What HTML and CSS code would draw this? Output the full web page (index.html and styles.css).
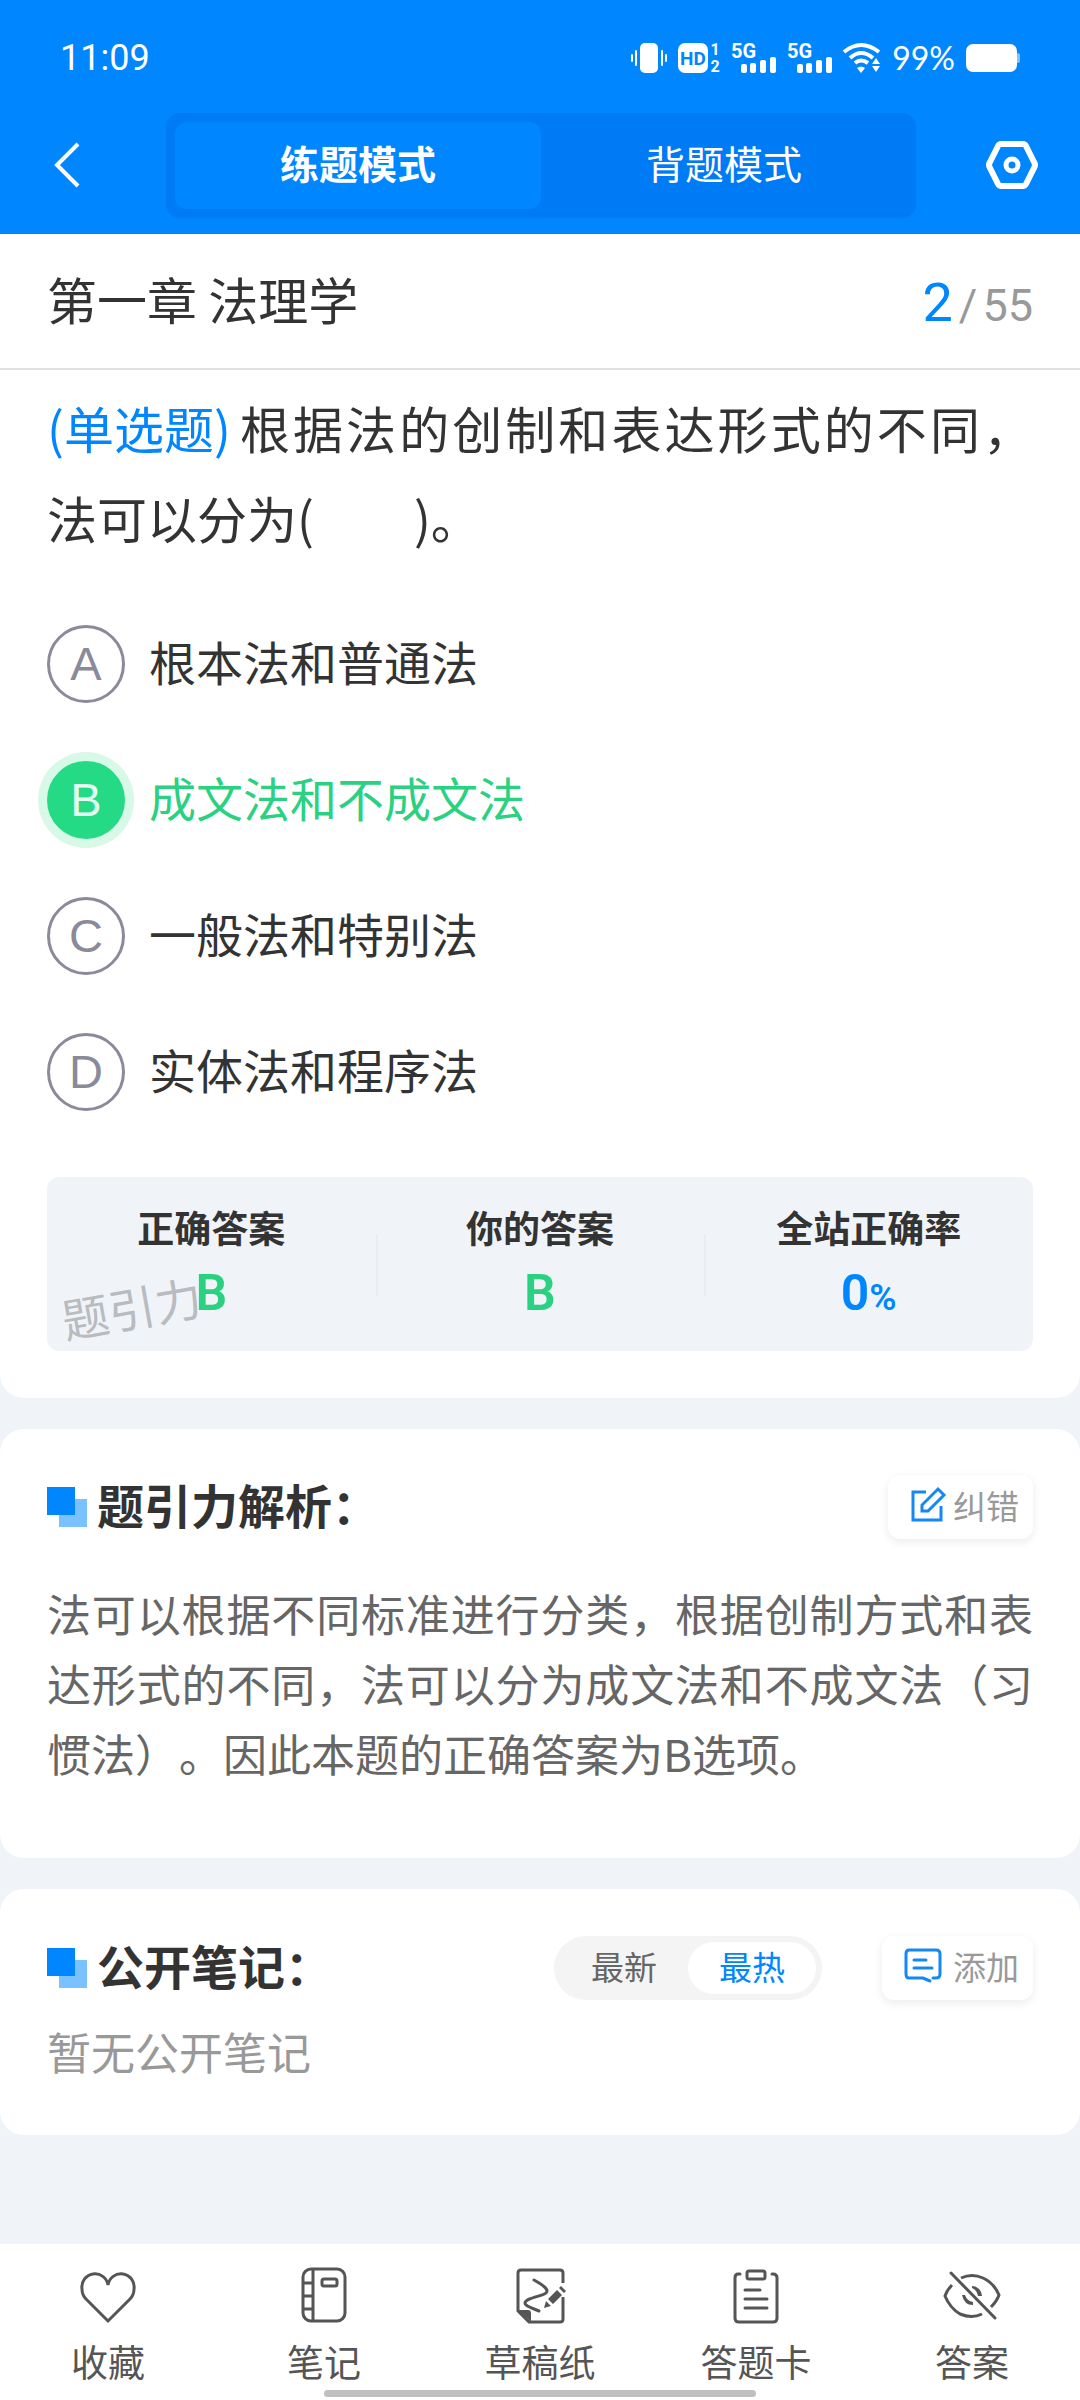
FILE: index.html
```html
<!DOCTYPE html>
<html lang="zh-CN">
<head>
<meta charset="utf-8">
<meta name="viewport" content="width=device-width, initial-scale=1">
<title>第一章 法理学</title>
<link rel="stylesheet" href="styles.css">
</head>
<body>
<header class="topbar">
  <div class="status">
    <span class="status-time">11:09</span>
    <div class="status-icons">
      <svg width="36" height="30" viewBox="0 0 36 30" fill="#fff" aria-hidden="true">
        <rect x="9" width="18" height="30" rx="5"/>
        <rect x="4" y="7" width="2" height="16" rx="1"/><rect x="30" y="7" width="2" height="16" rx="1"/>
        <rect x="0" y="11" width="2" height="8" rx="1"/><rect x="34" y="11" width="2" height="8" rx="1"/>
      </svg>
      <svg width="42" height="30" viewBox="0 0 42 30" aria-label="HD">
        <rect width="30" height="30" rx="7" fill="#fff"/>
        <text class="hd" x="15" y="22" text-anchor="middle">HD</text>
        <text class="sim" x="37" y="12" text-anchor="middle">1</text>
        <text class="sim" x="37" y="29" text-anchor="middle">2</text>
      </svg>
      <svg width="45" height="30" viewBox="0 0 45 30" fill="#fff">
        <text class="net" x="0" y="15">5G</text>
        <rect x="10" y="21" width="6" height="9" rx="2"/><rect x="19" y="20" width="6" height="10" rx="2"/><rect x="29" y="17" width="6" height="13" rx="2"/><rect x="39" y="14" width="6" height="16" rx="2"/>
      </svg>
      <svg width="45" height="30" viewBox="0 0 45 30" fill="#fff">
        <text class="net" x="0" y="15">5G</text>
        <rect x="10" y="21" width="6" height="9" rx="2"/><rect x="19" y="20" width="6" height="10" rx="2"/><rect x="29" y="17" width="6" height="13" rx="2"/><rect x="39" y="14" width="6" height="16" rx="2"/>
      </svg>
      <svg width="38" height="30" viewBox="0 0 38 30" aria-hidden="true">
        <g fill="none" stroke="#fff" stroke-width="4">
          <path d="M1 9Q18 -5 36 9"/><path d="M7 15Q18 5 30 15"/><path d="M12 20Q18 15 25 20"/>
        </g>
        <path d="M14 25Q18 22 22 25L18 30Z" fill="#fff"/>
        <path d="M33 15L37 21H29ZM33 29L29 23H37Z" fill="#fff"/>
      </svg>
      <span class="status-level">99%</span>
      <svg width="54" height="28" viewBox="0 0 54 28" aria-hidden="true">
        <rect width="51" height="28" rx="7" fill="#fff"/><path d="M51 9q3 0 3 2v6q0 2-3 2z" fill="#80c2ff"/>
      </svg>
    </div>
  </div>
  <div class="modebar">
    <button class="icon-btn back" type="button" aria-label="返回">
      <svg width="28" height="48" viewBox="0 0 28 48" fill="none" stroke="#fff" stroke-width="4"><path d="M25 2L4 23L25 44"/></svg>
    </button>
    <div class="modes">
      <button class="mode mode-on" type="button">练题模式</button>
      <button class="mode" type="button">背题模式</button>
    </div>
    <button class="icon-btn settings" type="button" aria-label="设置">
      <svg width="52" height="48" viewBox="0 1 52 48" fill="none" stroke="#fff" stroke-width="6" stroke-linejoin="round"><path d="M15 3H37Q39 3 40 5L48 21Q50 24 48 27L40 43Q39 45 37 45H15Q13 45 12 43L4 27Q2 24 4 21L12 5Q13 3 15 3Z"/><circle cx="26" cy="24" r="6" stroke-width="5"/></svg>
    </button>
  </div>
</header>

<main class="content">
  <section class="card card-question">
    <div class="chapter">
      <h1 class="chapter-name">第一章 法理学</h1>
      <p class="progress"><span class="progress-now">2</span><span class="progress-sep">/</span><span>55</span></p>
    </div>
    <div class="question">
      <p class="stem"><span class="kind">(单选题)</span>根据法的创制和表达形式的不同，法可以分为(&#12288;&#12288;)。</p>
      <form class="options">
        <label class="option"><span class="badge"><input class="dot" type="radio" name="answer" value="A"><span class="letter">A</span></span>根本法和普通法</label>
        <label class="option"><span class="badge"><input class="dot" type="radio" name="answer" value="B" checked><span class="letter">B</span></span>成文法和不成文法</label>
        <label class="option"><span class="badge"><input class="dot" type="radio" name="answer" value="C"><span class="letter">C</span></span>一般法和特别法</label>
        <label class="option"><span class="badge"><input class="dot" type="radio" name="answer" value="D"><span class="letter">D</span></span>实体法和程序法</label>
      </form>
      <dl class="result">
        <div class="result-item"><dt>正确答案</dt><dd>B</dd></div>
        <div class="result-item"><dt>你的答案</dt><dd>B</dd></div>
        <div class="result-item"><dt>全站正确率</dt><dd class="rate">0<small>%</small></dd></div>
        <div class="watermark" aria-hidden="true">题引力</div>
      </dl>
    </div>
  </section>

  <section class="card card-analysis">
    <div class="card-head">
      <h2 class="card-title"><i class="mark"></i><span class="card-name">题引力解析：</span></h2>
      <button class="action" type="button">
        <svg width="35" height="36" viewBox="0 0 35 36" fill="none" stroke="#1488f5" stroke-width="3"><path d="M16 5H3V33H31V19"/><path d="M12 24V18L28 2L34 8L18 24Z"/></svg>纠错</button>
    </div>
    <p class="analysis">法可以根据不同标准进行分类，根据创制方式和表达形式的不同，法可以分为成文法和不成文法（习惯法）。因此本题的正确答案为B选项。</p>
  </section>

  <section class="card card-notes">
    <div class="card-head">
      <h2 class="card-title"><i class="mark"></i><span class="card-name">公开笔记：</span></h2>
      <div class="tools">
        <div class="sort">
          <button class="sort-btn" type="button">最新</button>
          <button class="sort-btn sort-on" type="button">最热</button>
        </div>
        <button class="action" type="button">
          <svg width="41" height="36" viewBox="0 0 41 36" fill="none" stroke="#1488f5" stroke-width="3" stroke-linecap="round"><path d="M29 30H32Q36 30 36 26V6Q36 2 32 2H5Q2 2 2 6V26Q2 30 5 30H19L26 33"/><path d="M10 12H22M10 20H28"/></svg>添加</button>
      </div>
    </div>
    <p class="empty">暂无公开笔记</p>
  </section>
</main>

<nav class="tabbar">
  <button class="tab" type="button">
    <svg width="64" height="64" viewBox="0 0 64 64" fill="none" stroke="#555" stroke-width="3"><path d="M32 57L10 35Q6 31 6 25A13 13 0 0 1 32 21A13 13 0 0 1 58 25Q58 31 54 35Z"/></svg>收藏</button>
  <button class="tab" type="button">
    <svg width="64" height="64" viewBox="0 0 64 64" fill="none" stroke="#555" stroke-width="3"><rect x="11" y="5" width="42" height="52" rx="8"/><path d="M21 5V57M11 19H21M11 32H21M11 45H21"/><rect x="30" y="15" width="15" height="7" rx="2"/></svg>笔记</button>
  <button class="tab" type="button">
    <svg width="64" height="64" viewBox="0 0 64 64" fill="none" stroke="#555" stroke-width="3"><path d="M55 19V9Q55 6 52 6H13Q10 6 10 9V47L21 58H52Q55 58 55 55V33"/><path d="M10 46H20Q23 46 23 49V58Z" fill="#555" stroke="none"/><path d="M26 16C37 22 41 26 38 29C35 32 17 34 17 39C17 42 24 44 31 47" stroke-linecap="round"/><path d="M40 35L49 26L54 31L45 40ZM38 37L43 42L36 44ZM51 24L53 22L58 27L56 29Z" fill="#555" stroke="none"/></svg>草稿纸</button>
  <button class="tab" type="button">
    <svg width="64" height="64" viewBox="0 0 64 64" fill="none" stroke="#555" stroke-width="3" stroke-linecap="round"><path d="M16 10H14Q11 10 11 14V54Q11 58 15 58H49Q53 58 53 54V14Q53 10 49 10H48"/><rect x="23" y="7" width="18" height="8" rx="2"/><path d="M21 26H36M21 35H43M21 44H43"/></svg>答题卡</button>
  <button class="tab" type="button">
    <svg width="64" height="64" viewBox="0 0 64 64" fill="none" stroke="#555" stroke-width="3"><path d="M21 14Q32 9 43 14Q54 19 59 31Q57 37 51 43"/><path d="M12 21Q7 26 5 32Q10 44 20 50Q32 55 42 50"/><path d="M11 9L55 54" stroke-linecap="round"/><path d="M32 22A10 10 0 0 1 42 32H38Q37 26 32 24ZM22 31Q24 41 33 41V38Q27 37 25 31Z" fill="#555" stroke="none"/></svg>答案</button>
  <span class="home-bar"></span>
</nav>
</body>
</html>
```
FILE: styles.css
```css
* { box-sizing: border-box; }

body {
  margin: 0;
  min-height: 100vh;
  display: flex;
  flex-direction: column;
  background: #f0f4f8;
  color: #333;
  font-family: "Noto Sans CJK SC", sans-serif;
  text-spacing-trim: space-all;
}

h1, h2, p, dl, dd { margin: 0; }
svg { display: block; flex: none; overflow: visible; }

button {
  padding: 0;
  border: 0;
  background: none;
  color: inherit;
  font: inherit;
}

/* Top bar */
.topbar { background: #0086ff; color: #fff; }

.status {
  display: flex;
  justify-content: space-between;
  align-items: center;
  padding: 28px 60px 25px;
  line-height: 60px;
}
.status-time { font-family: Roboto, sans-serif; font-size: 36px; }
.status-icons { display: flex; align-items: center; gap: 11px; }
.status-level { font-family: Lato, sans-serif; font-size: 32px; }
.hd { font: 700 19px Roboto, sans-serif; fill: #0086ff; }
.sim { font: 700 16px Roboto, sans-serif; fill: #fff; }
.net { font: 700 20px Roboto, sans-serif; }

.modebar {
  display: grid;
  grid-template-columns: 166px 1fr 164px;
  align-items: center;
  padding-bottom: 16px;
}
.icon-btn { display: flex; }
.back { padding-left: 53px; }
.settings { padding-left: 70px; }
.modes {
  display: grid;
  grid-template-columns: 1fr 1fr;
  padding: 9px;
  border-radius: 14px;
  background: #007bf6;
}
.mode { padding-bottom: 6px; border-radius: 12px; font-size: 39px; line-height: 81px; }
.mode-on { background: #0086ff; font-weight: 700; }

/* Cards */
.content { display: grid; gap: 31px; }
.card { background: #fff; border-radius: 24px; }
.card-question { border-radius: 0 0 24px 24px; }

.chapter {
  display: flex;
  justify-content: space-between;
  padding: 0 47px;
  border-bottom: 2px solid #e0e0e0;
}
.chapter-name { padding-bottom: 6px; font-size: 50px; font-weight: 400; line-height: 128px; }
.progress {
  display: flex;
  align-items: baseline;
  align-self: center;
  padding-top: 6px;
  color: #999;
  font-family: Roboto, sans-serif;
  font-size: 45px;
  line-height: 60px;
}
.progress-now { color: #0086ff; font-size: 54px; }
.progress-sep { padding: 0 5px 0 6px; }

.question { padding: 12px 47px 47px; }
.stem { font-size: 50px; line-height: 90px; text-align: justify; }
.kind { display: inline-block; margin-right: 6px; color: #0086ff; }

.options { display: grid; gap: 58px; padding: 63px 0 66px; }
.option { display: flex; gap: 24px; font-size: 47px; line-height: 72px; }
.option:has(:checked) { color: #2ad181; }
.badge { display: grid; place-items: center; color: #8a8a99; font-family: "Liberation Sans", sans-serif; }
.dot, .letter { grid-area: 1 / 1; }
.dot {
  appearance: none;
  width: 78px;
  height: 78px;
  margin: 0;
  border: 3px solid #8a8a99;
  border-radius: 50%;
}
.dot:checked { border-color: #25da85; background: #25da85; box-shadow: 0 0 0 9px #d8f8e8; }
.dot:checked + .letter { color: #e4fff2; }

.result {
  position: relative;
  display: grid;
  grid-template-columns: 1fr 1fr 1fr;
  padding: 22px 0 20px;
  border-radius: 12px;
  background: #f0f4f8;
  text-align: center;
}
.result-item { position: relative; z-index: 1; }
.result-item + .result-item::before {
  content: "";
  position: absolute;
  left: 0;
  top: 35px;
  height: 62px;
  border-left: 2px solid #e9edf1;
}
.result dt { font-size: 37px; font-weight: 700; line-height: 56px; }
.result dd { color: #2ad181; font-family: Roboto, sans-serif; font-size: 50px; font-weight: 600; line-height: 76px; }
.result .rate { color: #0086ff; }
.rate small { font-size: 37px; line-height: 1; }
.watermark {
  position: absolute;
  left: 14px;
  bottom: 9px;
  color: #b8bbc0;
  font-size: 47px;
  line-height: 70px;
  transform: rotate(-10deg);
}

.card-analysis { padding: 45px 47px 70px; }
.card-notes { padding: 46px 47px 49px; }
.card-head { display: flex; justify-content: space-between; align-items: center; }
.card-title { display: flex; align-items: center; gap: 10px; font-size: 47px; font-weight: 700; line-height: 60px; }
.card-name { padding-bottom: 6px; }
.mark {
  width: 40px;
  height: 40px;
  background:
    linear-gradient(#0086ff, #0086ff) 0 0 / 28px 28px no-repeat,
    linear-gradient(#7ac1ff, #7ac1ff) 100% 100% / 28px 28px no-repeat;
}
.tools { display: flex; align-items: center; gap: 60px; }
.action {
  display: flex;
  align-items: center;
  gap: 8px;
  padding: 0 14px 4px 22px;
  border-radius: 12px;
  background: #fff;
  box-shadow: 0 3px 10px rgba(0, 0, 0, 0.08);
  color: #999;
  font-size: 33px;
  line-height: 60px;
}
.sort { display: flex; padding: 6px; border-radius: 32px; background: #f4f4f4; color: #666; }
.sort-btn { width: 128px; padding-bottom: 4px; border-radius: 26px; font-size: 33px; line-height: 48px; }
.sort-on { background: #fff; color: #0086ff; }
.analysis { padding-top: 38px; color: #666; font-size: 44px; line-height: 70px; text-align: justify; }
.empty { padding-top: 15px; color: #999; font-size: 44px; line-height: 70px; }

/* Bottom navigation */
.tabbar {
  position: relative;
  display: grid;
  grid-template-columns: repeat(5, 1fr);
  margin-top: auto;
  padding: 20px 0 11px;
  background: #fff;
  color: #555;
}
.tab {
  display: flex;
  flex-direction: column;
  align-items: center;
  gap: 5px;
  font-size: 37px;
  line-height: 56px;
}
.home-bar {
  position: absolute;
  left: 30%;
  right: 30%;
  bottom: 3px;
  height: 7px;
  border-radius: 4px;
  background: #c0c0c0;
}
```
